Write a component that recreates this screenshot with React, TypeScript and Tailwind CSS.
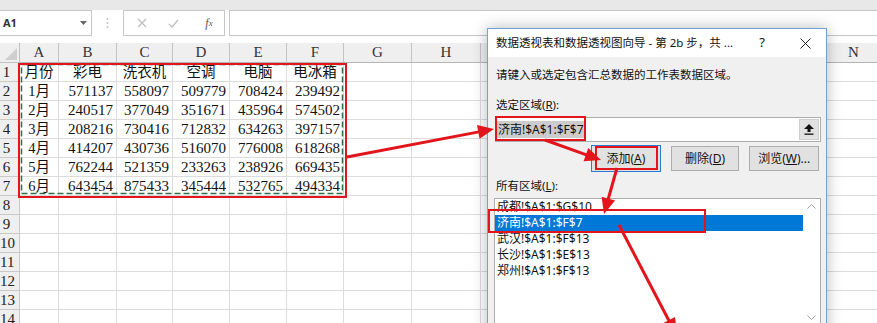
import React from "react";

const colW = [
  "w-[20px]",
  "w-[39px]",
  "w-[58px]",
  "w-[56px]",
  "w-[57px]",
  "w-[57px]",
  "w-[57px]",
  "w-[68px]",
  "w-[69px]",
  "w-[69px]",
  "w-[69px]",
  "w-[69px]",
  "w-[69px]",
  "w-[69px]",
  "w-[56px]",
];
const letters = ["A", "B", "C", "D", "E", "F", "G", "H", "", "", "", "", "", "N"];

const data: string[][] = [
  ["月份", "彩电", "洗衣机", "空调", "电脑", "电冰箱"],
  ["1月", "571137", "558097", "509779", "708424", "239492"],
  ["2月", "240517", "377049", "351671", "435964", "574502"],
  ["3月", "208216", "730416", "712832", "634263", "397157"],
  ["4月", "414207", "430736", "516070", "776008", "618268"],
  ["5月", "762244", "521359", "233263", "238926", "669435"],
  ["6月", "643454", "875433", "345444", "532765", "494334"],
];

const sheetFont = { fontFamily: '"Liberation Serif", "Noto Sans CJK SC", serif' };
const uiFont = { fontFamily: '"Noto Sans", "Noto Sans CJK SC", sans-serif' };

function Row({ n }: { n: number }) {
  const vals = data[n - 1];
  return (
    <div className="flex h-[19px]">
      <div className="w-[20px] shrink-0 bg-[#efefef] border-r border-b border-[#c9c9c9] text-[15px] leading-[18px] text-[#222]">
        <span className="block w-[13px] text-center">{n}</span>
      </div>
      {colW.slice(1).map((w, i) => {
        const v = vals ? vals[i] : undefined;
        const isNum = v !== undefined && /^\d+$/.test(v);
        return (
          <div
            key={i}
            className={`${w} shrink-0 border-r border-b border-[#dcdcdc] text-[#111] leading-[18px] overflow-hidden whitespace-nowrap ${
              isNum ? "text-right pr-[3px] text-[15px]" : "text-center text-[14.5px]"
            }`}
          >
            {v ?? ""}
          </div>
        );
      })}
    </div>
  );
}

function Arrow({ x1, y1, x2, y2, head = 16, hw = 7 }: { x1: number; y1: number; x2: number; y2: number; head?: number; hw?: number }) {
  const dx = x2 - x1;
  const dy = y2 - y1;
  const len = Math.hypot(dx, dy);
  const ux = dx / len;
  const uy = dy / len;
  const bx = x2 - ux * head;
  const by = y2 - uy * head;
  const nx = -uy;
  const ny = ux;
  const pts = `${x2},${y2} ${bx + nx * hw},${by + ny * hw} ${bx - nx * hw},${by - ny * hw}`;
  return (
    <g>
      <line x1={x1} y1={y1} x2={bx + ux * 2} y2={by + uy * 2} stroke="#e3151c" strokeWidth={3} />
      <polygon points={pts} fill="#e3151c" />
    </g>
  );
}

export default function App() {
  return (
    <div className="relative w-[877px] h-[323px] overflow-hidden bg-white" style={sheetFont}>
      {/* ribbon bottom band */}
      <div className="h-[10px] bg-[#e8e8e8]" />
      {/* formula bar */}
      <div className="flex h-[26px] items-stretch" style={uiFont}>
        <div className="w-[92px] shrink-0 border border-l-0 border-[#c6c6c6] bg-white flex items-center justify-between pl-[3px] pr-[4px]">
          <span className="text-[11px] font-bold text-[#333]">A1</span>
          <svg width="7" height="4" viewBox="0 0 7 4">
            <polygon points="0,0 7,0 3.5,4" fill="#666" />
          </svg>
        </div>
        <div className="w-[31px] shrink-0 flex items-center justify-center">
          <svg width="3" height="12" viewBox="0 0 3 12">
            <circle cx="1.5" cy="2" r="1" fill="#c4c4c4" />
            <circle cx="1.5" cy="6" r="1" fill="#c4c4c4" />
            <circle cx="1.5" cy="10" r="1" fill="#c4c4c4" />
          </svg>
        </div>
        <div className="w-[102px] shrink-0 border border-[#c6c6c6] bg-white flex items-center">
          <div className="w-[36px] flex justify-center">
            <svg width="10" height="10" viewBox="0 0 10 10">
              <path d="M1 1 L9 9 M9 1 L1 9" stroke="#bdbdbd" strokeWidth="1.2" />
            </svg>
          </div>
          <div className="w-[26px] flex justify-center">
            <svg width="11" height="9" viewBox="0 0 11 9">
              <path d="M1 5 L4 8 L10 1" stroke="#bdbdbd" strokeWidth="1.2" fill="none" />
            </svg>
          </div>
          <div className="flex-1 flex justify-center text-[#555] italic text-[12px] pl-[8px]" style={sheetFont}>
            <span>f</span>
            <span className="text-[9px] mt-[3px]">x</span>
          </div>
        </div>
        <div className="w-[4px] shrink-0" />
        <div className="flex-1 border border-r-0 border-[#c6c6c6] bg-white" />
      </div>
      <div className="h-[7px]" />
      {/* column headers */}
      <div className="flex h-[20px]">
        <div className="w-[20px] shrink-0 bg-[#efefef] border-r border-b border-[#c0c0c0] relative">
          <svg className="absolute right-[2px] bottom-[2px]" width="12" height="12" viewBox="0 0 12 12">
            <polygon points="12,0 12,12 0,12" fill="#cfcfcf" />
          </svg>
        </div>
        {colW.slice(1).map((w, i) => (
          <div
            key={i}
            className={`${w} shrink-0 bg-[#efefef] border-r border-b border-[#c3c3c3] border-b-[#b5b5b5] text-center text-[15px] leading-[19px] text-[#333]`}
          >
            {letters[i]}
          </div>
        ))}
      </div>
      {Array.from({ length: 14 }, (_, i) => (
        <Row key={i} n={i + 1} />
      ))}

      {/* marquee and red box around table */}
      <svg className="absolute left-[20px] top-[63px] pointer-events-none" width="324" height="133" viewBox="0 0 324 133">
        <rect x="1.5" y="1.5" width="321" height="129" fill="none" stroke="#2e6e49" strokeWidth="1.5" strokeDasharray="6 3" />
      </svg>
      <div className="absolute left-[18px] top-[63px] w-[329px] h-[135px] border-2 border-[#e3151c]" />

      {/* dialog */}
      <div
        className="absolute left-[487px] top-[28px] w-[340px] h-[320px] border border-[#6fa3d8] bg-[#f0f0f0] shadow-[0_0_14px_rgba(0,0,0,0.28)]"
        style={uiFont}
      >
        <div className="h-[28px] bg-white flex items-center text-[11.5px] text-[#111]">
          <span className="pl-[8px] whitespace-nowrap">数据透视表和数据透视图向导 - 第 2b 步，共 ...</span>
          <span className="ml-auto w-[30px] text-center text-[13px]">?</span>
          <span className="ml-[8px] w-[40px] flex justify-center mr-[1px]">
            <svg width="11" height="11" viewBox="0 0 11 11">
              <path d="M0.5 0.5 L10.5 10.5 M10.5 0.5 L0.5 10.5" stroke="#222" strokeWidth="1" />
            </svg>
          </span>
        </div>
        <div className="px-[7px] text-[11.5px] text-[#111]">
          <div className="mt-[10px] h-[16px] leading-[16px] pl-[1px]">请键入或选定包含汇总数据的工作表数据区域。</div>
          <div className="mt-[14px] h-[16px] leading-[16px] pl-[1px]">
            选定区域(<span className="underline">R</span>):
          </div>
          <div className="mt-[4px] h-[25px] w-[326px] border border-[#adadad] bg-white flex items-center">
            <span className="ml-[1px] bg-[#cccccc] text-[12px] leading-[17px] px-[1px] text-[#111]">济南!$A$1:$F$7</span>
            <span className="w-[1px] h-[15px] bg-black" />
            <div className="ml-auto mr-[1px] w-[20px] h-[21px] bg-[#e1e1e1] border border-[#cfcfcf] flex items-center justify-center">
              <svg width="10" height="11" viewBox="0 0 10 11">
                <polygon points="5,0 10,5 6.5,5 6.5,8 3.5,8 3.5,5 0,5" fill="#111" />
                <rect x="0.5" y="9.5" width="9" height="1.3" fill="#111" />
              </svg>
            </div>
          </div>
          <div className="mt-[3px] h-[27px] flex items-center text-[12px]">
            <div className="ml-[96px] w-[70px] h-[27px] border border-[#2b7bd3] flex items-center justify-center bg-[#e1e1e1]">
              <span>
                添加(<span className="underline">A</span>)
              </span>
            </div>
            <div className="ml-[10px] w-[69px] h-[25px] border border-[#adadad] bg-[#e1e1e1] flex items-center justify-center">
              <span>
                删除(<span className="underline">D</span>)
              </span>
            </div>
            <div className="ml-[10px] w-[70px] h-[25px] border border-[#adadad] bg-[#e1e1e1] flex items-center justify-center">
              <span>
                浏览(<span className="underline">W</span>)...
              </span>
            </div>
          </div>
          <div className="mt-[6px] h-[16px] leading-[16px] pl-[1px]">
            所有区域(<span className="underline">L</span>):
          </div>
          <div className="mt-[4px] ml-[-1px] w-[327px] h-[140px] border border-[#adadad] bg-white flex text-[12px]">
            <div className="flex-1">
              {["成都!$A$1:$G$10", "济南!$A$1:$F$7", "武汉!$A$1:$F$13", "长沙!$A$1:$E$13", "郑州!$A$1:$F$13"].map((t, i) => (
                <div
                  key={t}
                  className={`h-[16px] leading-[16px] pl-[2px] ${i === 1 ? "bg-[#0078d7] text-white" : "text-[#111]"}`}
                >
                  {t}
                </div>
              ))}
            </div>
            <div className="w-[17px] flex flex-col items-center justify-between py-[5px] h-[126px]">
              <svg width="9" height="5" viewBox="0 0 9 5">
                <path d="M0.5 4.5 L4.5 0.5 L8.5 4.5" stroke="#a0a0a0" fill="none" />
              </svg>
              <svg width="9" height="5" viewBox="0 0 9 5">
                <path d="M0.5 0.5 L4.5 4.5 L8.5 0.5" stroke="#a0a0a0" fill="none" />
              </svg>
            </div>
          </div>
        </div>
      </div>

      {/* red highlight boxes */}
      <div className="absolute left-[495px] top-[116px] w-[91px] h-[25px] border-2 border-[#e3151c]" />
      <div className="absolute left-[595px] top-[146px] w-[63px] h-[24px] border-2 border-[#e3151c]" />
      <div className="absolute left-[488px] top-[209px] w-[218px] h-[24px] border-2 border-[#e3151c]" />

      {/* arrows */}
      <svg className="absolute left-0 top-0 pointer-events-none" width="877" height="323" viewBox="0 0 877 323">
        <Arrow x1={347} y1={157} x2={494} y2={129} />
        <Arrow x1={545} y1={140} x2={601} y2={160} />
        <Arrow x1={617} y1={168} x2={604} y2={214} />
        <Arrow x1={619} y1={225} x2={678} y2={338} head={20} />
      </svg>
    </div>
  );
}
